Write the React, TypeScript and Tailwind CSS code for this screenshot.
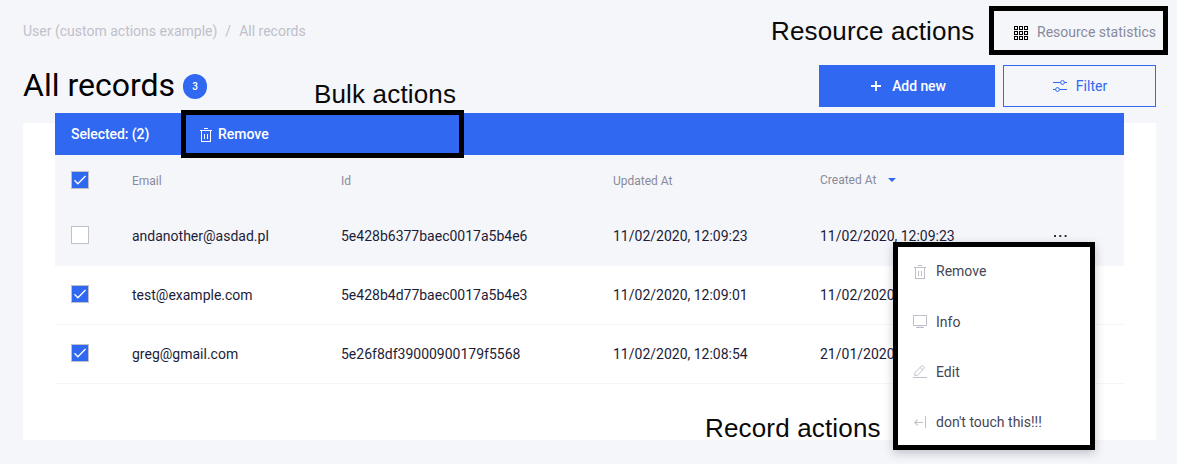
import React from "react";

type IconProps = { className?: string };

const TrashIcon = ({ className }: IconProps) => (
  <svg width="14" height="16" viewBox="0 0 14 16" fill="none" stroke="currentColor" className={className} shapeRendering="crispEdges">
    <path d="M5 1.5h4M1 3.5h12M2.5 4v10.5h9V4M5.5 6.5v5.5M8.5 6.5v5.5" />
  </svg>
);

const ScreenIcon = ({ className }: IconProps) => (
  <svg width="14" height="14" viewBox="0 0 14 14" fill="none" stroke="currentColor" className={className} shapeRendering="crispEdges">
    <path d="M.5 .5h13v10H.5zM5.5 10.5v2M8.5 10.5v2M3 12.5h8" />
  </svg>
);

const EditIcon = ({ className }: IconProps) => (
  <svg width="14" height="14" viewBox="0 0 14 14" fill="none" stroke="currentColor" className={className}>
    <path d="M0 12.5h14" />
    <path d="M1.8 10.4V7.6L8.7 .9q.6-.5 1.2 0l1.2 1.2q.5.6 0 1.2L4.4 10.4zM7.2 2.4l2.5 2.5" />
  </svg>
);

const ExitIcon = ({ className }: IconProps) => (
  <svg width="14" height="14" viewBox="0 0 14 14" fill="none" stroke="currentColor" className={className}>
    <path d="M12.5 1v12" />
    <path d="M10 7.5H1.8M4.6 4.7L1.8 7.5l2.8 2.8" strokeWidth="1.1" />
  </svg>
);

const GridIcon = () => (
  <svg width="14" height="14" viewBox="0 0 14 14" fill="none" stroke="#000" shapeRendering="crispEdges">
    {[0.5, 5.5, 10.5].map((y) =>
      [0.5, 5.5, 10.5].map((x) => <rect key={`${x}-${y}`} x={x} y={y} width="3" height="3" />)
    )}
  </svg>
);

const PlusIcon = () => (
  <svg width="10" height="10" viewBox="0 0 10 10" stroke="#fff" strokeWidth="1.8">
    <path d="M5 0v10M0 5h10" />
  </svg>
);

const SlidersIcon = () => (
  <svg width="14" height="12" viewBox="0 0 14 12" fill="none" stroke="currentColor">
    <path d="M0 2.5h7.5M11.5 2.5H14M0 9.5h2.5M6.5 9.5H14" />
    <circle cx="9.5" cy="2.5" r="1.9" />
    <circle cx="4.5" cy="9.5" r="1.9" />
  </svg>
);

const Checkbox = ({ checked }: { checked: boolean }) => (
  <span className={`mb-[2px] flex h-[18px] w-[18px] items-center justify-center border border-[#c0c0ca] ${checked ? "bg-[#3068f1]" : "bg-white"}`}>
    {checked && (
      <svg width="14" height="12" viewBox="0 0 14 12" fill="none" stroke="#fff" strokeWidth="1.3">
        <path d="M1.5 6.2l3.4 3.5L12.5 2" />
      </svg>
    )}
  </span>
);

const rows = [
  { email: "andanother@asdad.pl", id: "5e428b6377baec0017a5b4e6", updated: "11/02/2020, 12:09:23", created: "11/02/2020, 12:09:23", checked: false },
  { email: "test@example.com", id: "5e428b4d77baec0017a5b4e3", updated: "11/02/2020, 12:09:01", created: "11/02/2020, 12:09:01", checked: true },
  { email: "greg@gmail.com", id: "5e26f8df39000900179f5568", updated: "11/02/2020, 12:08:54", created: "21/01/2020, 13:06:39", checked: true },
];

const menu = [
  { label: "Remove", icon: TrashIcon, height: "h-[51px]" },
  { label: "Info", icon: ScreenIcon, height: "h-[50px]" },
  { label: "Edit", icon: EditIcon, height: "h-[50px]" },
  { label: "don't touch this!!!", icon: ExitIcon, height: "h-[50px]" },
];

const columns = "grid grid-cols-[61px_209px_272px_207px_234px_1fr] pl-4";
const note = "absolute whitespace-nowrap font-['Liberation_Sans',sans-serif] text-[26px] leading-[30px] tracking-[0.16px] text-[#0a0a0a]";

export default function App() {
  return (
    <div className="relative h-[464px] w-[1177px] overflow-hidden bg-[#f5f6fa] pl-[23px] pr-[21px] font-['Roboto',sans-serif] text-sm text-[#1c1c38]">
      <div className="flex h-[65px] items-center justify-between text-[#c0c0ca]">
        <nav className="flex gap-[8px] pb-[3px]">
          <span>User (custom actions example)</span>
          <span>/</span>
          <span>All records</span>
        </nav>
        <a className="flex items-center gap-[9px] text-[#898a9a]">
          <GridIcon />
          <span className="pb-[2px]">Resource statistics</span>
        </a>
      </div>

      <header className="flex h-[42px] items-center justify-between">
        <h1 className="flex items-center gap-[8px] pb-[3px] text-[32px] leading-10 text-black">
          All records
          <span className="mt-[4px] flex h-[25px] w-6 items-center justify-center rounded-full bg-[#3068f1] text-[10px] font-medium leading-none text-white">3</span>
        </h1>
        <div className="flex gap-2">
          <button className="flex h-[42px] w-44 items-center justify-center gap-[11px] bg-[#3068f1] pl-[3px] font-medium tracking-[-0.08px] text-white">
            <PlusIcon />
            Add new
          </button>
          <button className="flex h-[42px] w-[153px] items-center justify-center gap-[9px] border border-[#3068f1] pl-px text-[#3068f1]">
            <SlidersIcon />
            Filter
          </button>
        </div>
      </header>

      <main className="mt-4 h-[317px] bg-white px-8">
        <div className="relative -top-[10px]">
          <div className="flex h-[42px] items-center bg-[#3068f1] pl-4 font-medium text-white">
            <span className="w-[128px] tracking-[-0.08px]">Selected: (2)</span>
            <TrashIcon className="mr-[5px] mt-0.5" />
            <span>Remove</span>
          </div>
          <div className={`${columns} h-[52px] items-center bg-[#f5f6fa] pb-px text-xs text-[#898a9a]`}>
            <Checkbox checked />
            <span>Email</span>
            <span>Id</span>
            <span>Updated At</span>
            <span className="flex items-center gap-3 pb-[2px]">
              Created At
              <svg width="8" height="4" viewBox="0 0 8 4"><path d="M0 0h8L4 4z" fill="#3068f1" /></svg>
            </span>
          </div>
          {rows.map((row) => (
            <div key={row.id} className={`${columns} h-[59px] items-center border-b border-[#f5f6fa] ${row.checked ? "bg-white" : "bg-[#f5f6fa]"}`}>
              <Checkbox checked={row.checked} />
              <span>{row.email}</span>
              <span>{row.id}</span>
              <span>{row.updated}</span>
              <span>{row.created}</span>
              {!row.checked && (
                <svg width="13" height="2" viewBox="0 0 13 2" fill="#303040" className="mb-px"><path d="M0 0h2v2H0zM5.3 0h2v2h-2zM10.6 0h2v2h-2z" /></svg>
              )}
            </div>
          ))}
        </div>
      </main>

      <div className="absolute left-[893px] top-[242px] h-[208px] w-[202px] border-5 border-black bg-white text-[#454655] shadow-[0_3px_9px_rgba(69,70,85,0.3)]">
        <div className="-mt-px flex flex-col">
          {menu.map(({ label, icon: Icon, height }) => (
            <div key={label} className={`flex ${height} shrink-0 items-center gap-[9px] pl-[15px]`}>
              <Icon className="text-[#c0c0ca]" />
              <span className="pb-px">{label}</span>
            </div>
          ))}
        </div>
      </div>

      <div className="absolute left-[989px] top-[6px] h-[49px] w-[179px] border-5 border-black" />
      <div className="absolute left-[181px] top-[110px] h-[48px] w-[283px] border-5 border-black" />
      <span className={`${note} left-[771px] top-[16px]`}>Resource actions</span>
      <span className={`${note} left-[314px] top-[79px]`}>Bulk actions</span>
      <span className={`${note} left-[705px] top-[413px]`}>Record actions</span>
    </div>
  );
}
